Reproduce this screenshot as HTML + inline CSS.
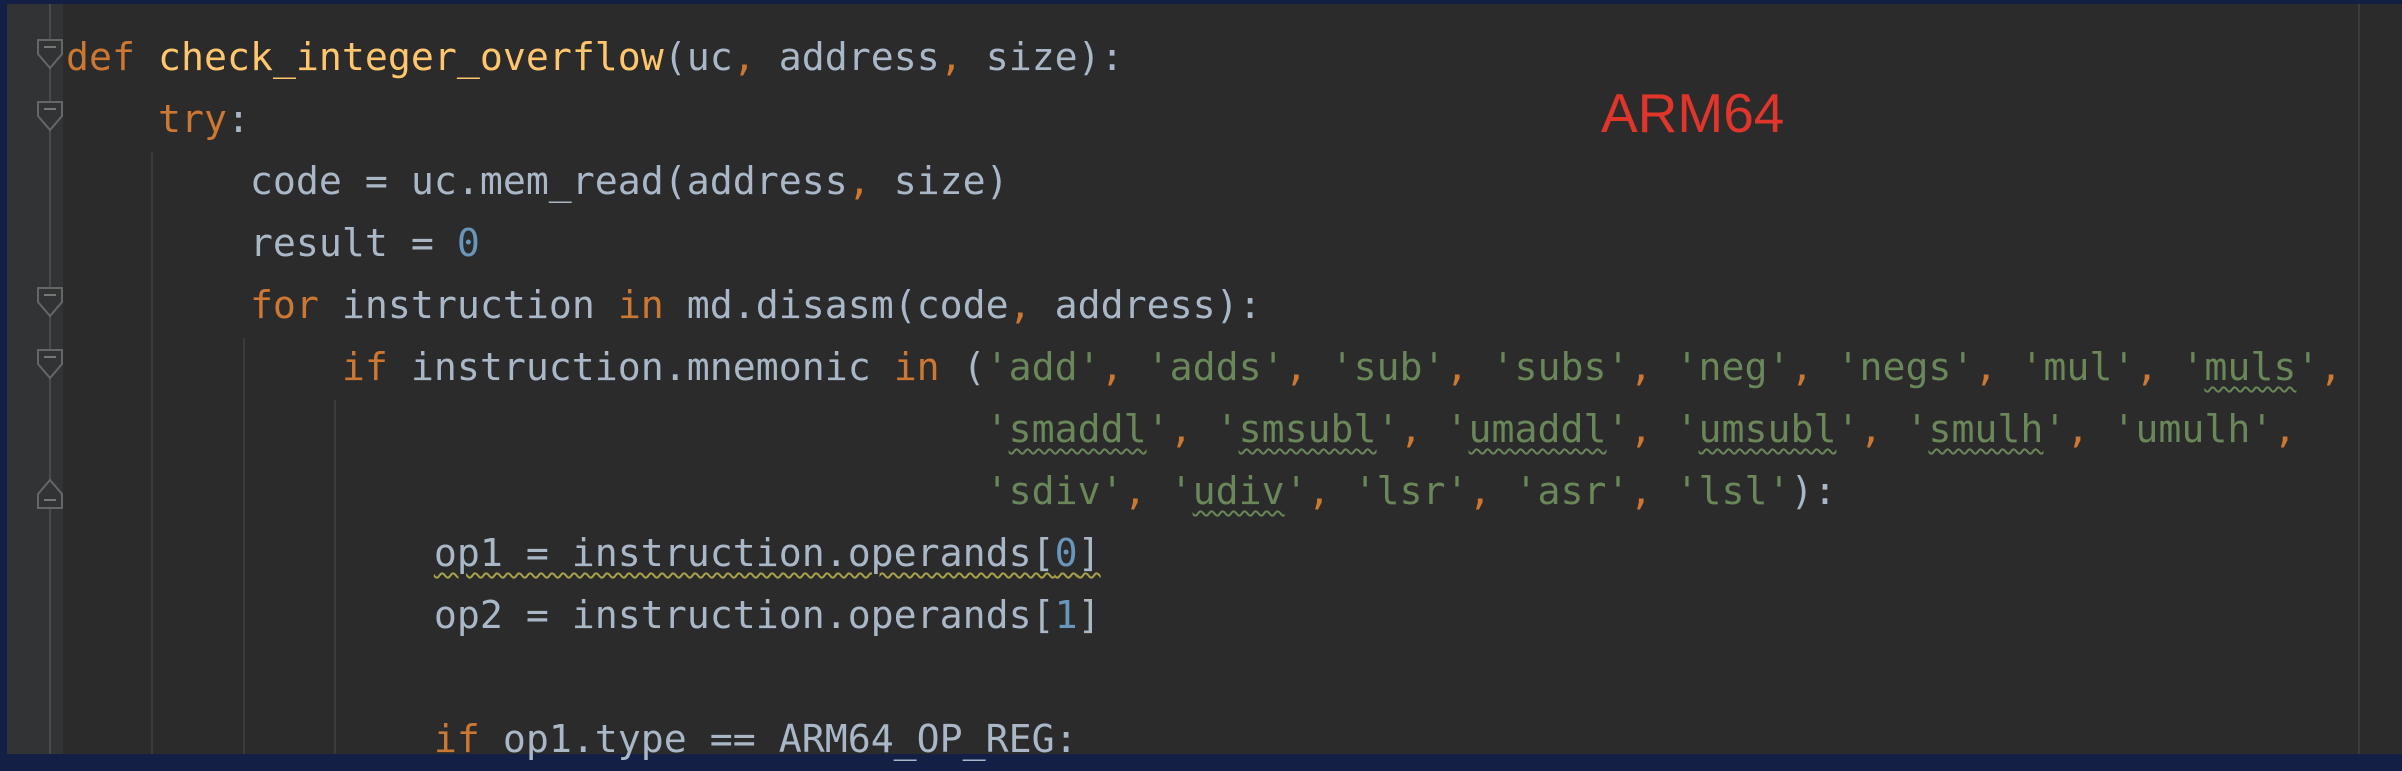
<!DOCTYPE html>
<html><head><meta charset="utf-8"><style>
html,body{margin:0;padding:0;width:2402px;height:766px;overflow:hidden;background:#141f45}
#ed{position:absolute;left:7px;top:4px;width:2395px;height:750px;background:#2b2b2b}
#gut{position:absolute;left:7px;top:4px;width:56px;height:750px;background:#313335}
.vl{position:absolute;width:2px;background:#3b3b3b}
pre{position:absolute;left:66px;top:27px;margin:0;font-family:"DejaVu Sans Mono",monospace;font-size:38.2px;line-height:62px;color:#a9b7c6;white-space:pre}
.k{color:#cc7832}.f{color:#ffc66d}.s{color:#6a8759}.n{color:#6897bb}
.w{text-decoration:underline wavy #6a8759;text-decoration-thickness:2px;text-underline-offset:6px}
.wy{text-decoration:underline wavy #a7a24a;text-decoration-thickness:2px;text-underline-offset:6px}
#arm{position:absolute;left:1601px;top:86px;font-family:"Liberation Sans",sans-serif;font-size:55px;color:#e0352b;line-height:1}
</style></head><body>
<div id="ed"></div>
<div id="gut"></div>
<div class="vl" style="left:49px;top:4px;height:750px;background:#4a4a4a"></div>
<div class="vl" style="left:151px;top:152px;height:602px"></div>
<div class="vl" style="left:243px;top:338px;height:416px"></div>
<div class="vl" style="left:334px;top:400px;height:354px"></div>
<div class="vl" style="left:2358px;top:4px;height:750px;background:#3c3c3c"></div>
<svg style="position:absolute;left:0;top:0" width="80" height="766">
<g fill="#313335" stroke="#666" stroke-width="2">
<path d="M38 40 h24 v14 l-12 14 l-12 -14 z"/>
<path d="M38 102 h24 v14 l-12 14 l-12 -14 z"/>
<path d="M38 288 h24 v14 l-12 14 l-12 -14 z"/>
<path d="M38 350 h24 v14 l-12 14 l-12 -14 z"/>
<path d="M38 508 h24 v-14 l-12 -14 l-12 14 z"/>
</g>
<g stroke="#777" stroke-width="2"><path d="M44 47h12M44 109h12M44 295h12M44 357h12M44 500h12"/></g>
</svg>
<pre><span class="k">def</span> <span class="f">check_integer_overflow</span>(uc<span class="k">,</span> address<span class="k">,</span> size):
    <span class="k">try</span>:
        code = uc.mem_read(address<span class="k">,</span> size)
        result = <span class="n">0</span>
        <span class="k">for</span> instruction <span class="k">in</span> md.disasm(code<span class="k">,</span> address):
            <span class="k">if</span> instruction.mnemonic <span class="k">in</span> (<span class="s">'add'</span><span class="k">,</span> <span class="s">'adds'</span><span class="k">,</span> <span class="s">'sub'</span><span class="k">,</span> <span class="s">'subs'</span><span class="k">,</span> <span class="s">'neg'</span><span class="k">,</span> <span class="s">'negs'</span><span class="k">,</span> <span class="s">'mul'</span><span class="k">,</span> <span class="s">'<span class="w">muls</span>'</span><span class="k">,</span>
                                        <span class="s">'<span class="w">smaddl</span>'</span><span class="k">,</span> <span class="s">'<span class="w">smsubl</span>'</span><span class="k">,</span> <span class="s">'<span class="w">umaddl</span>'</span><span class="k">,</span> <span class="s">'<span class="w">umsubl</span>'</span><span class="k">,</span> <span class="s">'<span class="w">smulh</span>'</span><span class="k">,</span> <span class="s">'umulh'</span><span class="k">,</span>
                                        <span class="s">'sdiv'</span><span class="k">,</span> <span class="s">'<span class="w">udiv</span>'</span><span class="k">,</span> <span class="s">'lsr'</span><span class="k">,</span> <span class="s">'asr'</span><span class="k">,</span> <span class="s">'lsl'</span>):
                <span class="wy">op1 = instruction.operands[<span class="n">0</span>]</span>
                op2 = instruction.operands[<span class="n">1</span>]

                <span class="k">if</span> op1.type == ARM64_OP_REG:</pre>
<div id="arm">ARM64</div>
</body></html>
